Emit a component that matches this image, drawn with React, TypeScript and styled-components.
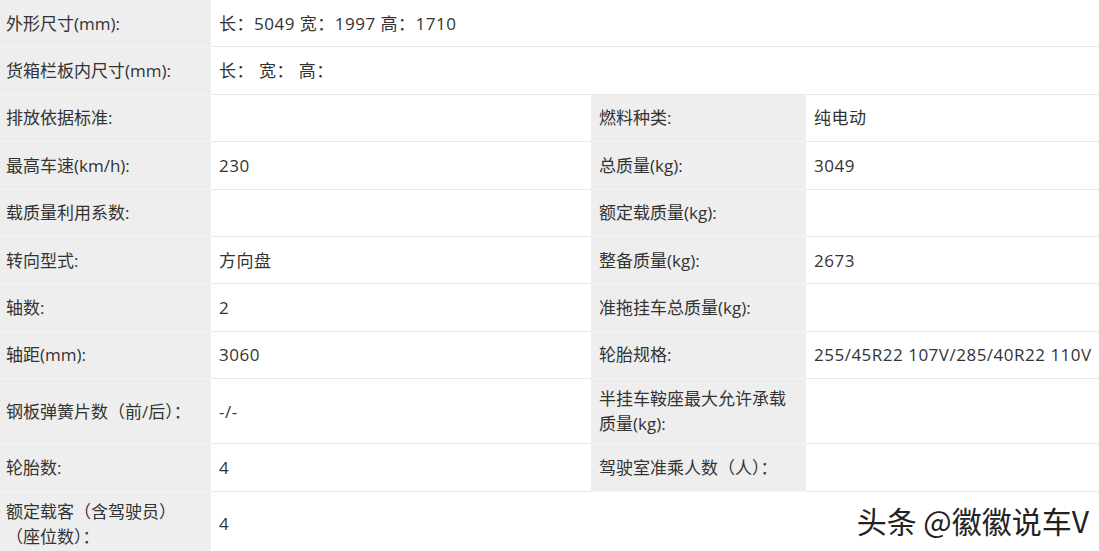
import React from 'react';
import styled, { createGlobalStyle } from 'styled-components';

const GlobalStyle = createGlobalStyle`
  html, body {
    margin: 0;
    padding: 0;
    background: #ffffff;
    overflow: hidden;
  }
  body {
    font-family: "Open Sans", "Noto Sans CJK SC", sans-serif;
  }
`;

const Page = styled.div`
  position: relative;
  width: 1099px;
  height: 551px;
  overflow: hidden;
`;

const Table = styled.div`
  display: grid;
  grid-template-columns: 211px 380px 215px 1fr;
  width: 1099px;
  color: #333333;
  font-size: 17px;
  line-height: 25px;
`;

const Cell = styled.div<{ $label?: boolean; $span?: number }>`
  grid-column: span ${(p) => p.$span ?? 1};
  min-height: 47.4px;
  box-sizing: border-box;
  padding: 7px ${(p) => (p.$label ? '6px' : '8px')};
  display: flex;
  align-items: center;
  background: ${(p) => (p.$label ? '#eeeeee' : '#ffffff')};
  border-bottom: 1px solid ${(p) => (p.$label ? '#f6f6f6' : '#e8e8e8')};
  letter-spacing: ${(p) => (p.$label ? '0' : '0.5px')};
  white-space: nowrap;
`;

const RightLabel = styled(Cell)`
  padding-left: 8px;
`;

const Watermark = styled.div`
  position: absolute;
  right: 10px;
  bottom: 15px;
  font-family: "Noto Sans CJK SC", sans-serif;
  font-size: 30px;
  line-height: 32px;
  color: #222222;
  text-shadow: 0 0 2px #ffffff, 0 0 2px #ffffff, 1px 1px 0 #ffffff;
`;

type Pair = [string, React.ReactNode, string, React.ReactNode];

const rows: Pair[] = [
  ['排放依据标准:', '', '燃料种类:', '纯电动'],
  ['最高车速(km/h):', '230', '总质量(kg):', '3049'],
  ['载质量利用系数:', '', '额定载质量(kg):', ''],
  ['转向型式:', '方向盘', '整备质量(kg):', '2673'],
  ['轴数:', '2', '准拖挂车总质量(kg):', ''],
  ['轴距(mm):', '3060', '轮胎规格:', '255/45R22 107V/285/40R22 110V'],
  ['钢板弹簧片数（前/后）：', '-/-', '', ''],
  ['轮胎数:', '4', '驾驶室准乘人数（人）：', ''],
];

const App = () => {
  return (
    <Page>
      <GlobalStyle />
      <Table>
        <Cell $label>外形尺寸(mm):</Cell>
        <Cell $span={3}>长：5049 宽：1997 高：1710</Cell>
        <Cell $label>货箱栏板内尺寸(mm):</Cell>
        <Cell $span={3}>长： 宽： 高：</Cell>
        {rows.map((row, i) => (
          <React.Fragment key={i}>
            <Cell $label>{row[0]}</Cell>
            <Cell>{row[1]}</Cell>
            <RightLabel $label>
              {i === 6 ? (
                <span>
                  半挂车鞍座最大允许承载
                  <br />
                  质量(kg):
                </span>
              ) : (
                row[2]
              )}
            </RightLabel>
            <Cell>{row[3]}</Cell>
          </React.Fragment>
        ))}
        <Cell $label>
          <span>
            额定载客（含驾驶员）
            <br />
            （座位数）：
          </span>
        </Cell>
        <Cell $span={3}>4</Cell>
      </Table>
      <Watermark>头条 @徽徽说车V</Watermark>
    </Page>
  );
};

export default App;
